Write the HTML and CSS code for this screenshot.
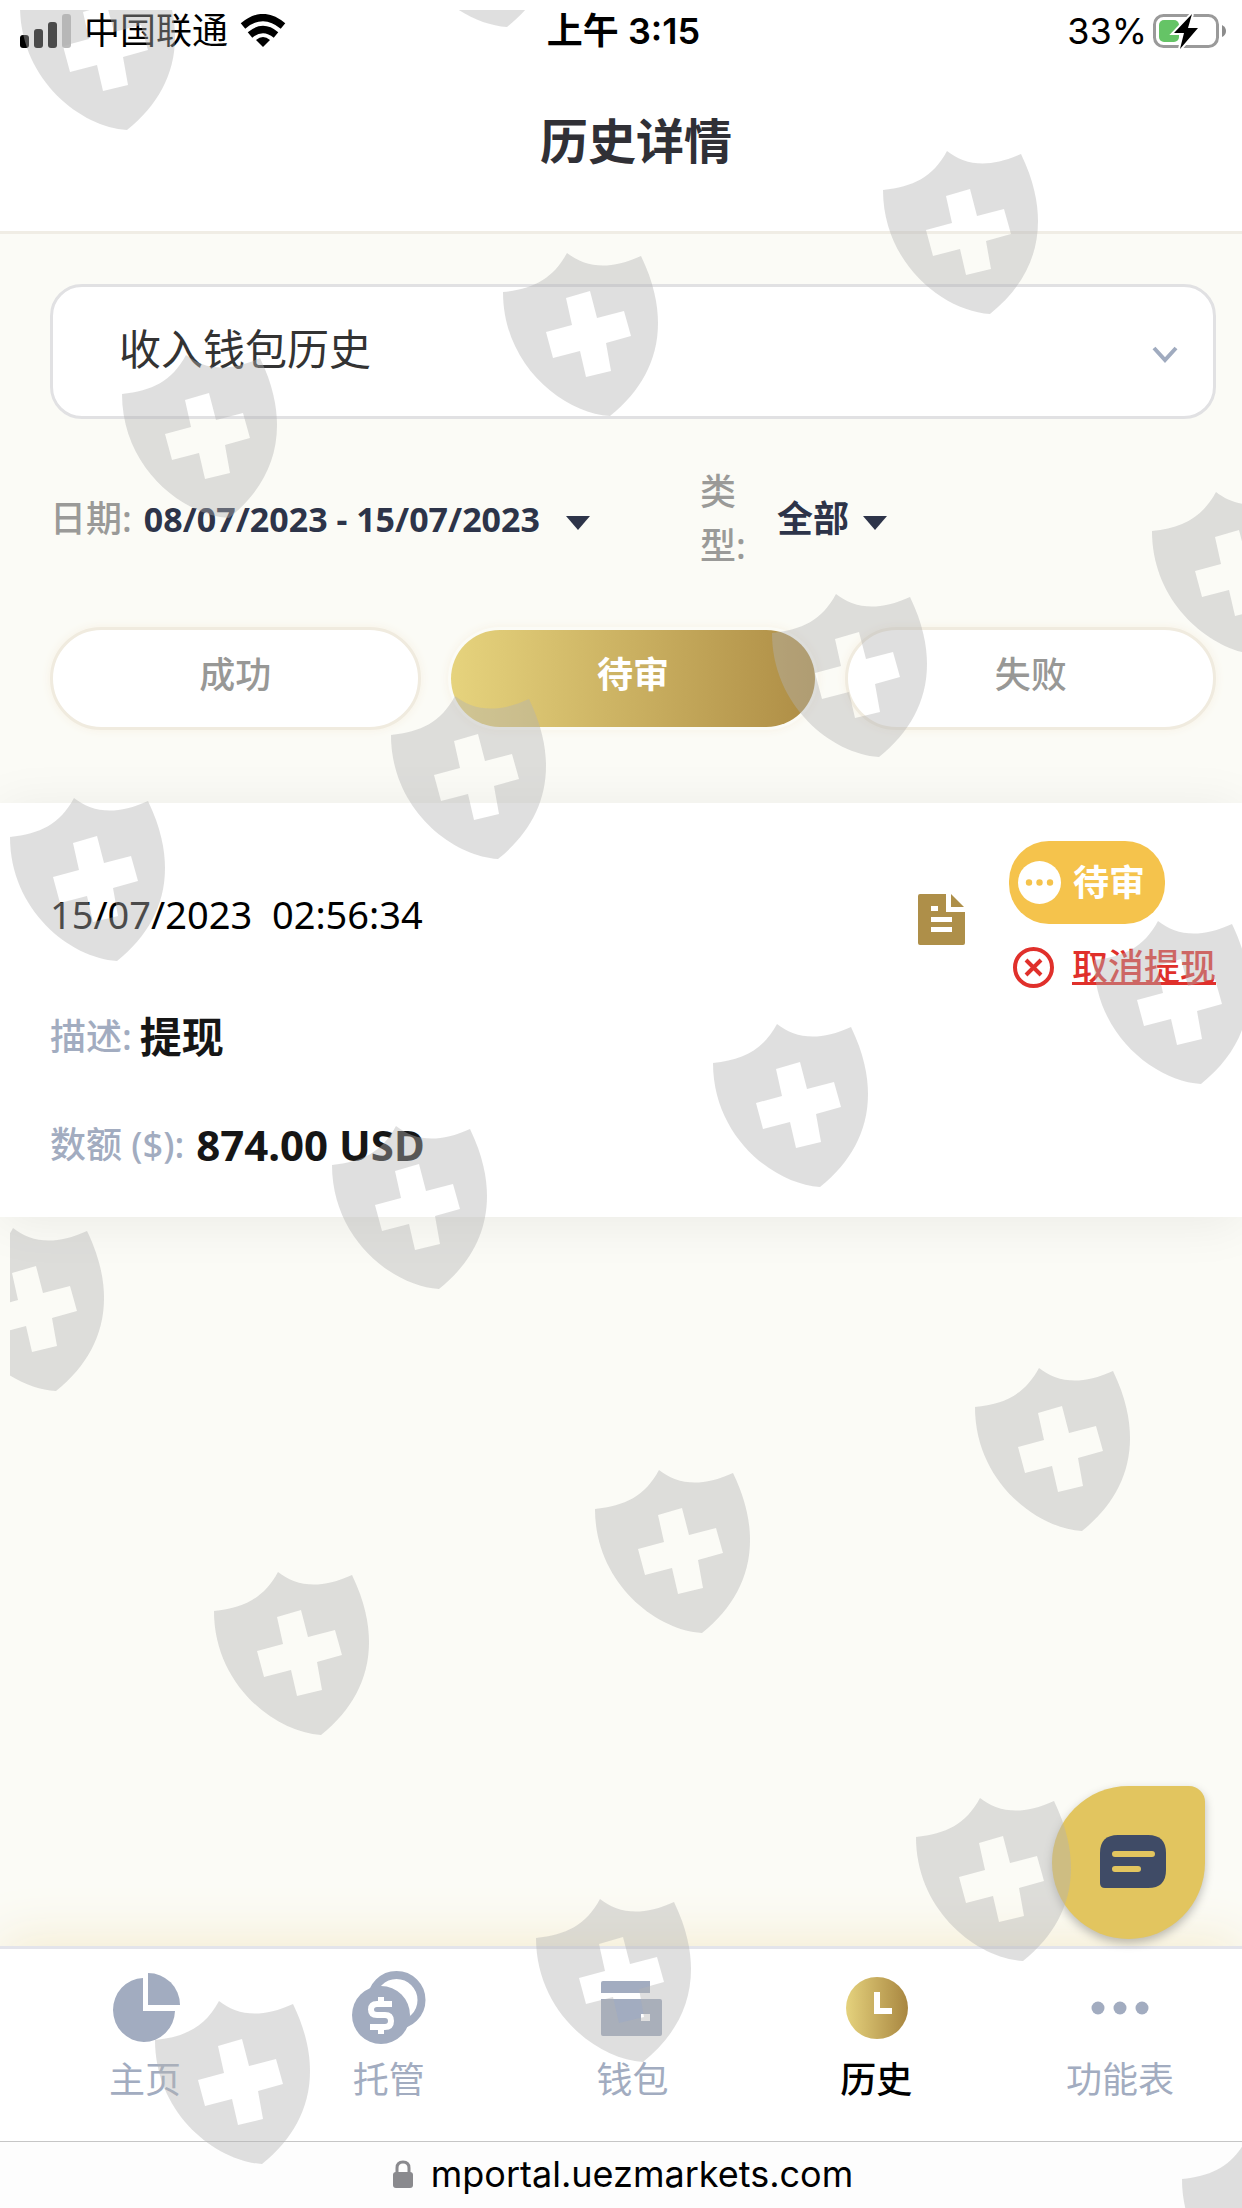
FILE: index.html
```html
<!DOCTYPE html>
<html lang="zh-CN">
<head>
  <meta charset="UTF-8" />
  <meta name="viewport" content="width=device-width, initial-scale=1.0" />
  <title>历史详情</title>
  <link rel="stylesheet" href="styles.css">
</head>
<body>

  <div class="status-bar">
    <div class="status-left">
      <svg class="signal" width="52" height="34" viewBox="0 0 52 34">
        <rect x="0" y="21" width="9" height="13" rx="3" fill="#000"/>
        <rect x="14" y="15" width="9" height="19" rx="3" fill="#000"/>
        <rect x="28" y="8" width="9" height="26" rx="3" fill="#000"/>
        <rect x="42" y="0" width="9" height="34" rx="3" fill="#bbb"/>
      </svg>
      <span>中国联通</span>
      <svg width="46" height="34" viewBox="0 0 46 34" fill="none" stroke="#000" stroke-width="7">
        <path d="M3 12 Q23 -5 43 12"/>
        <path d="M10 21 Q23 10 36 21"/>
        <path d="M23 33 L16 26 Q23 20 30 26 Z" fill="#000" stroke="none"/>
      </svg>
    </div>
    <div class="status-time">上午 3:15</div>
    <div class="status-right">
      <span>33%</span>
      <svg width="74" height="36" viewBox="0 0 74 36">
        <rect x="1.5" y="2.5" width="63" height="31" rx="9" fill="#fff" stroke="#9a9a9a" stroke-width="3"/>
        <rect x="6" y="7" width="20" height="22" rx="5" fill="#65c466"/>
        <path d="M69 12 Q73 14 73 18 Q73 22 69 24 Z" fill="#8c8c8c"/>
        <path d="M39 1 L21 20 H31 L27 36 L45 15 H35 Z" fill="#000" stroke="#fff" stroke-width="4" paint-order="stroke"/>
      </svg>
    </div>
  </div>

  <header class="page-header">
    <h1>历史详情</h1>
  </header>

  <main class="page">
    <section class="filters">
      <div class="wallet-select">
        <select aria-label="收入钱包历史">
          <option>收入钱包历史</option>
        </select>
        <svg width="26" height="18" viewBox="0 0 26 18" fill="none" stroke="#a0abbf" stroke-width="4">
          <path d="M2 2 L13 14 L24 2"/>
        </svg>
      </div>

      <div class="filter-row">
        <div class="filter-date">
          <span class="filter-label">日期:</span>
          <button class="filter-value" type="button">08/07/2023 - 15/07/2023 <i class="caret"></i></button>
        </div>
        <div class="filter-type">
          <span class="filter-label">类型:</span>
          <button class="filter-value" type="button">全部 <i class="caret"></i></button>
        </div>
      </div>

      <div class="tabs">
        <button class="tab" type="button">成功</button>
        <button class="tab active" type="button">待审</button>
        <button class="tab" type="button">失败</button>
      </div>
    </section>

    <article class="record">
      <div class="record-top">
        <time class="record-time">15/07/2023&nbsp; 02:56:34</time>
        <svg class="doc-icon" width="47" height="51" viewBox="0 0 47 51">
          <path fill="#ae8f49" fill-rule="evenodd" d="M2 0 H28 V18 H47 V49 Q47 51 45 51 H2 Q0 51 0 49 V2 Q0 0 2 0 Z M13 12 V17 H20 V12 Z M13 23 V28 H34 V23 Z M13 33 V38 H34 V33 Z"/>
          <path fill="#ae8f49" d="M33 0 L46 13 H33 Z"/>
        </svg>
        <div class="record-state">
          <span class="badge">
            <svg width="43" height="43" viewBox="0 0 43 43">
              <circle cx="21.500" cy="21.500" r="21.500" fill="#fff"/>
              <g fill="#f5c34c"><circle cx="11" cy="21.500" r="3.200"/><circle cx="21.500" cy="21.500" r="3.200"/><circle cx="32" cy="21.500" r="3.200"/></g>
            </svg>
            待审
          </span>
          <a class="cancel" href="#">
            <svg width="41" height="41" viewBox="0 0 41 41" fill="none" stroke="#e0302b" stroke-width="4">
              <circle cx="20.500" cy="20.500" r="18.500"/>
              <path d="M13 13 L28 28 M28 13 L13 28"/>
            </svg>
            <span>取消提现</span>
          </a>
        </div>
      </div>
      <p class="record-line"><span>描述:</span> <strong>提现</strong></p>
      <p class="record-line"><span>数额 ($):</span> <strong>874.00 USD</strong></p>
    </article>
  </main>

  <div class="bottom">
    <button class="chat" type="button" aria-label="chat">
      <svg width="66" height="53" viewBox="0 0 66 53">
        <path d="M18 0 H48 Q66 0 66 18 V35 Q66 53 48 53 H5 Q0 53 0 48 V18 Q0 0 18 0 Z" fill="#3f4b66"/>
        <path d="M15 19 H52 M15 34 H38" stroke="#e2c55f" stroke-width="6" stroke-linecap="round"/>
      </svg>
    </button>

    <nav class="tabbar">
      <a href="#">
        <svg width="74" height="76" viewBox="0 0 74 76" fill="#a2acc0">
          <path d="M35 8 A31 32 0 1 0 67 41 H35 Z"/>
          <path d="M40 3 A32 32 0 0 1 72 35 H40 Z"/>
        </svg>
        <span>主页</span>
      </a>
      <a href="#">
        <svg width="74" height="76" viewBox="0 0 74 76">
          <circle cx="44.500" cy="30" r="25" fill="#fff" stroke="#a2acc0" stroke-width="8"/>
          <circle cx="29" cy="45" r="29" fill="#a2acc0"/>
          <path d="M40 34 H25 Q19 34 19 39.500 Q19 45 25 45 H33 Q39 45 39 51 Q39 57 33 57 H18 M29 27 V34 M29 57 V64" fill="none" stroke="#fff" stroke-width="6"/>
        </svg>
        <span>托管</span>
      </a>
      <a href="#">
        <svg width="74" height="76" viewBox="0 0 74 76" fill="#a2acc0">
          <path d="M8 11 H55 V23 H6 V13 Q6 11 8 11 Z"/>
          <path fill-rule="evenodd" d="M6 29 H65 Q67 29 67 31 V64 Q67 66 65 66 H8 Q6 66 6 64 Z M46 44 V51 H55 V44 Z"/>
        </svg>
        <span>钱包</span>
      </a>
      <a href="#" class="current">
        <svg width="74" height="76" viewBox="0 0 74 76">
          <defs>
            <linearGradient id="gold">
              <stop offset="0" stop-color="#e5d27d"/>
              <stop offset="1" stop-color="#a88640"/>
            </linearGradient>
          </defs>
          <circle cx="38" cy="38" r="31" fill="url(#gold)"/>
          <path d="M38 22 V41 H53" fill="none" stroke="#fff" stroke-width="6"/>
        </svg>
        <span>历史</span>
      </a>
      <a href="#">
        <svg width="74" height="76" viewBox="0 0 74 76" fill="#a2acc0">
          <circle cx="15" cy="38" r="6.500"/>
          <circle cx="37" cy="38" r="6.500"/>
          <circle cx="59" cy="38" r="6.500"/>
        </svg>
        <span>功能表</span>
      </a>
    </nav>

    <div class="url-bar">
      <svg width="20" height="28" viewBox="0 0 20 28">
        <path d="M4 14 V8 Q4 2 10 2 Q16 2 16 8 V14" fill="none" stroke="#8a8a8e" stroke-width="3"/>
        <rect x="0" y="12" width="20" height="16" rx="3" fill="#8a8a8e"/>
      </svg>
      <span>mportal.uezmarkets.com</span>
    </div>
  </div>

  <!-- shield pattern over the whole screen -->
  <svg class="shields" aria-hidden="true">
    <defs>
      <path id="shield" fill-rule="evenodd" d="M0 39 C30 36 50 26 64 0 C82 14 105 18 138 3 C151 30 155 52 155 70 C155 108 137 139 107 163 C60 160 0 112 0 39 Z M63 45 L69 72 L43 79 L50 105 L77 98 L83 124 L108 118 L103 90 L128 83 L121 58 L94 65 L87 38 Z"/>
    </defs>
    <use href="#shield" x="10" y="-43"/>
    <use href="#shield" x="390" y="-146"/>
    <use href="#shield" x="873" y="141"/>
    <use href="#shield" x="493" y="243"/>
    <use href="#shield" x="112" y="345"/>
    <use href="#shield" x="1142" y="482"/>
    <use href="#shield" x="762" y="584"/>
    <use href="#shield" x="381" y="686"/>
    <use href="#shield" x="0" y="788"/>
    <use href="#shield" x="1084" y="911"/>
    <use href="#shield" x="703" y="1014"/>
    <use href="#shield" x="322" y="1116"/>
    <use href="#shield" x="-61" y="1218"/>
    <use href="#shield" x="965" y="1358"/>
    <use href="#shield" x="585" y="1460"/>
    <use href="#shield" x="204" y="1562"/>
    <use href="#shield" x="906" y="1788"/>
    <use href="#shield" x="526" y="1889"/>
    <use href="#shield" x="145" y="1991"/>
    <use href="#shield" x="1172" y="2130"/>
  </svg>

</body>
</html>
```
FILE: styles.css
```css
* {
  margin: 0;
  padding: 0;
  box-sizing: border-box;
}
body {
  font-family: "Noto Sans", "Noto Sans CJK SC", sans-serif;
  font-size: 36px;
  line-height: 54px;
  color: #111;
  background: #fbfbf6;
  min-height: 100vh;
  display: flex;
  flex-direction: column;
}
button,
select {
  font: inherit;
  color: inherit;
  border: none;
  background: none;
}
a {
  color: inherit;
  text-decoration: none;
}
svg {
  flex: none;
}

/* status bar */
.status-bar {
  display: grid;
  grid-template-columns: 1fr auto 1fr;
  align-items: center;
  height: 62px;
  padding: 0 15px 0 20px;
  background: #fff;
  color: #000;
  font-family: Inter, "Noto Sans CJK SC", sans-serif;
  font-size: 36px;
}
.status-left,
.status-right {
  display: flex;
  align-items: center;
  gap: 12px;
}
.status-right {
  justify-content: flex-end;
  gap: 6px;
}
.status-time {
  font-weight: 600;
}

/* header */
.page-header {
  height: 172px;
  padding-top: 43px;
  padding-left: 30px;
  background: #fff;
  border-bottom: 3px solid #f0ede5;
  text-align: center;
}
.page-header h1 {
  font-size: 48px;
  font-weight: 600;
  line-height: 72px;
  color: #303036;
}

.page {
  flex: 1;
}
.filters {
  padding: 50px 26px 73px 50px;
}

.wallet-select {
  display: grid;
  align-items: center;
}
.wallet-select select,
.wallet-select svg {
  grid-area: 1 / 1;
}
.wallet-select svg {
  justify-self: end;
  margin-top: 6px;
  margin-right: 38px;
  pointer-events: none;
}
.wallet-select select {
  appearance: none;
  width: 100%;
  height: 135px;
  padding: 0 66px 6px;
  font-size: 42px;
  color: #333;
  background: #fff;
  border: 3px solid #e1e1e3;
  border-radius: 32px;
}

.filter-row {
  display: flex;
  align-items: center;
  gap: 110px;
  margin-top: 46px;
  height: 108px;
}
.filter-date,
.filter-type {
  display: flex;
  align-items: center;
  gap: 12px;
}
.filter-type {
  gap: 30px;
}
.filter-label {
  font-weight: 500;
  color: #9a9a98;
}
.filter-type .filter-label {
  width: 47px;
}
.filter-value {
  display: flex;
  align-items: center;
  gap: 14px;
  font-weight: 700;
  color: #2d3449;
}
.filter-date .filter-value {
  font-size: 34px;
  gap: 26px;
}
.caret {
  border: 12px solid transparent;
  border-top: 14px solid #2d3449;
  border-bottom: 0;
  margin-top: 8px;
}

.tabs {
  display: flex;
  gap: 27px;
  margin-top: 54px;
}
.tab {
  flex: 1;
  height: 103px;
  padding-bottom: 8px;
  font-weight: 500;
  color: #989896;
  background: #fff;
  border: 3px solid #f0ebdf;
  border-radius: 52px;
  box-shadow: 0 0 10px #f7f1e4;
}
.tab.active {
  color: #fff;
  font-weight: 600;
  background: linear-gradient(to right, #e6d37d, #ae8d45) padding-box;
  border-color: transparent;
}

/* record card */
.record {
  padding: 38px 26px 45px 50px;
  background: #fff;
  box-shadow: 0 5px 50px rgba(0, 0, 0, 0.07);
}
.record-top {
  display: flex;
  align-items: center;
}
.record-time {
  flex: 1;
  padding-bottom: 8px;
  font-size: 38px;
  color: #000;
}
.doc-icon {
  margin-right: 44px;
  margin-top: 4px;
}
.record-state {
  display: flex;
  flex-direction: column;
  align-items: flex-start;
  gap: 16px;
}
.badge {
  display: flex;
  align-items: center;
  gap: 12px;
  height: 83px;
  padding: 0 20px 0 9px;
  color: #fff;
  font-weight: 600;
  background: #f5c34c;
  border-radius: 40px;
}
.cancel {
  display: flex;
  align-items: center;
  gap: 18px;
  padding-left: 4px;
  font-weight: 500;
  color: #e0302b;
}
.cancel span {
  text-decoration: underline;
}
.record-line {
  display: flex;
  align-items: center;
  gap: 8px;
  margin-top: 16px;
  height: 54px;
}
.record-line + .record-line {
  gap: 12px;
  margin-top: 54px;
}
.record-line span {
  font-weight: 500;
  color: #a2acc0;
}
.record-line strong {
  font-size: 42px;
  font-weight: 700;
  color: #161616;
}

/* bottom */
.bottom {
  position: sticky;
  bottom: 0;
}
.chat {
  position: absolute;
  right: 37px;
  bottom: 269px;
  width: 153px;
  height: 153px;
  display: flex;
  align-items: center;
  justify-content: center;
  padding: 0 0 2px 9px;
  background: #e2c55f;
  border-radius: 50% 16px 50% 50%;
  box-shadow: 0 4px 10px rgba(0, 0, 0, 0.25);
}
.tabbar {
  display: flex;
  height: 195px;
  padding: 21px 0 0 23px;
  background: #fff;
  border-top: 3px solid #e3e4eb;
  box-shadow: 0 -6px 50px #f5eccf;
}
.tabbar a {
  flex: 1;
  display: flex;
  flex-direction: column;
  align-items: center;
  gap: 7px;
  color: #a2acc0;
}
.tabbar .current {
  color: #000;
  font-weight: 500;
}
.url-bar {
  position: relative;
  display: flex;
  align-items: center;
  justify-content: center;
  gap: 18px;
  height: 67px;
  padding-left: 4px;
  padding-bottom: 2px;
  border-top: 1px solid #c6c6c6;
  background: #fdfdfd;
  color: #000;
  font-family: Inter, sans-serif;
  font-size: 36px;
}

.shields {
  position: absolute;
  top: 10px;
  left: 10px;
  width: calc(100% - 10px);
  height: calc(100% - 10px);
  overflow: hidden;
  pointer-events: none;
  fill: rgba(178, 178, 178, 0.42);
}
```
